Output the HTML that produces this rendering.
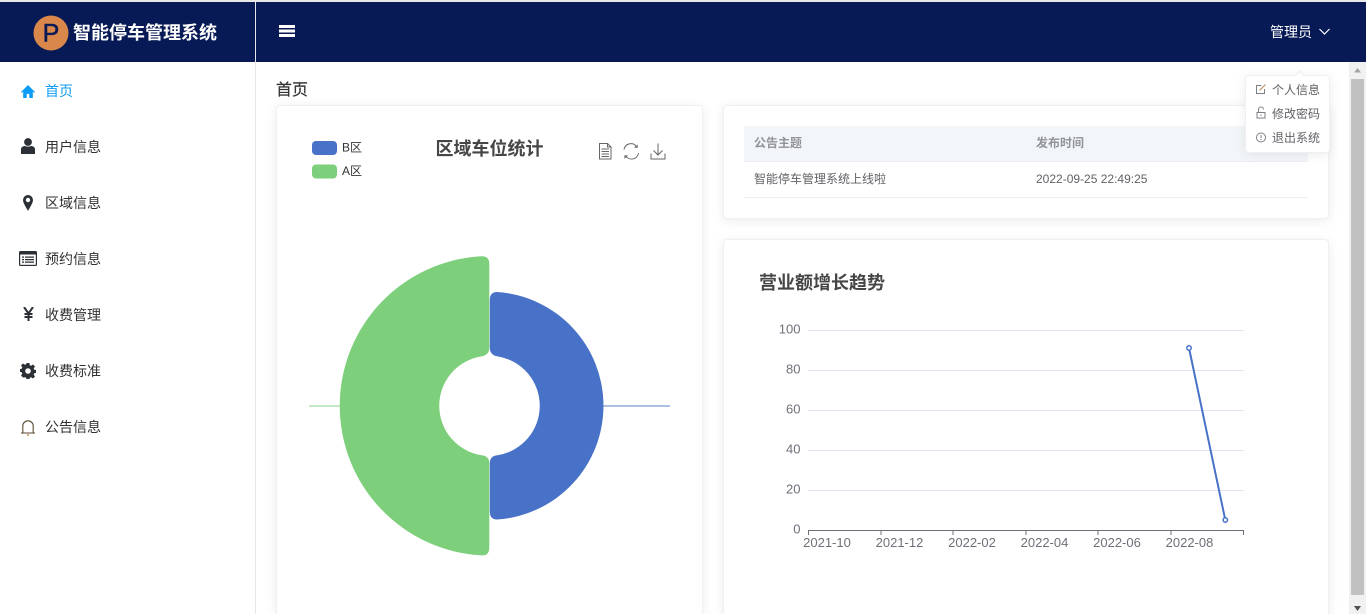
<!DOCTYPE html>
<html lang="zh-CN">
<head>
<meta charset="utf-8">
<title>智能停车管理系统</title>
<style>
*{box-sizing:border-box}
html,body{margin:0;padding:0;width:1366px;height:614px;overflow:hidden;background:#fff;font-family:"Liberation Sans","Noto Sans CJK SC",sans-serif}
#wrap{position:relative;width:1366px;height:614px;overflow:hidden;background:#fff}
.a{position:absolute}
.t{position:absolute;white-space:nowrap;line-height:20px;height:20px}
.side{font-size:14px;color:#303133;left:45px}
.card{position:absolute;background:#fff;border:1px solid #eef0f5;border-radius:4px;box-shadow:0 2px 12px rgba(0,0,0,.08)}
.open{border-bottom:0;border-radius:4px 4px 0 0}
svg{position:absolute;overflow:hidden}
svg text{font-family:"Liberation Sans","Noto Sans CJK SC",sans-serif}
</style>
</head>
<body>
<div id="wrap">
<div class="a" style="left:0;top:0;width:1366px;height:2px;background:#e8e8e8"></div>
<div class="a" style="left:0;top:2px;width:1366px;height:60px;background:#081a56"></div>
<div class="a" style="left:255px;top:2px;width:1px;height:612px;background:#e4e6ea"></div>

<svg style="left:33px;top:15px" width="36" height="36" viewBox="0 0 36 36"><circle cx="18" cy="18" r="17.500" fill="#d9874a"/><text x="18" y="26.500" font-size="25" text-anchor="middle" fill="#081a56" stroke="#081a56" stroke-width=".5">P</text></svg>
<div class="t" style="left:73px;top:23px;font-size:18px;font-weight:700;color:#fff">智能停车管理系统</div>

<svg style="left:279px;top:25px" width="16" height="12" viewBox="0 0 16 12"><path d="M0 0h16v3H0zM0 4.500h16v3H0zM0 9h16v3H0z" fill="#fff"/></svg>

<div class="t" style="left:1270px;top:22px;font-size:14px;color:#fff">管理员</div>
<svg style="left:1319px;top:28px" width="11" height="8" viewBox="0 0 11 8"><path d="M.5 1l5 5 5-5" fill="none" stroke="#fff" stroke-width="1.200"/></svg>

<!-- Sidebar -->
<svg style="left:21px;top:85px" width="14" height="13" viewBox="0 0 16 14" preserveAspectRatio="none"><path d="M8 0L0 7.500l1 1L2.500 7.200V14h4V9.500h3V14h4V7.200L15 8.500l1-1z" fill="#0c9bf5"/></svg>
<div class="t side" style="top:81px;color:#109df2">首页</div>

<svg style="left:21px;top:138px" width="14" height="16" viewBox="0 0 14 16"><circle cx="7" cy="4" r="3.900" fill="#2b2f36"/><path d="M0 16v-4.500C0 9 2 8 4 8c1 .8 5 .8 6 0 2 0 4 1 4 3.500V16z" fill="#2b2f36"/></svg>
<div class="t side" style="top:137px">用户信息</div>

<svg style="left:23px;top:195px" width="10" height="16" viewBox="0 0 10 16"><path fill-rule="evenodd" d="M5 0a5 5 0 0 1 5 5c0 3-3.500 8-5 11C3.500 13 0 8 0 5a5 5 0 0 1 5-5zm0 2.800a2.200 2.200 0 1 0 0 4.400 2.200 2.200 0 0 0 0-4.400z" fill="#2b2f36"/></svg>
<div class="t side" style="top:193px">区域信息</div>

<svg style="left:19px;top:251px" width="18" height="15" viewBox="0 0 18 15"><rect x="0" y="0" width="18" height="15" rx="1.500" fill="#2b2f36"/><rect x="1.200" y="3.500" width="15.600" height="10.300" fill="#fff"/><path d="M3 5.500h2v1.300H3zM6 5.500h9v1.300H6zM3 8h2v1.300H3zM6 8h9v1.300H6zM3 10.500h2v1.300H3zM6 10.500h9v1.300H6z" fill="#2b2f36"/></svg>
<div class="t side" style="top:249px">预约信息</div>

<svg style="left:23px;top:307px" width="11" height="14" viewBox="0 0 11 14"><path d="M1 0l4.500 6.500L10 0M5.500 6.500V14M1.500 7h8M1.500 10h8" fill="none" stroke="#2b2f36" stroke-width="2"/></svg>
<div class="t side" style="top:305px">收费管理</div>

<svg style="left:20px;top:363px" width="16" height="16" viewBox="0 0 16 16"><path fill-rule="evenodd" d="M6.600 0h2.800l.4 2.200 1.300.6L13 1.500l2 2-1.300 1.900.6 1.300 2.300.4v2.800l-2.300.4-.6 1.300 1.300 1.900-2 2-1.900-1.300-1.300.6-.4 2.200H6.600l-.4-2.200-1.300-.6L3 14.500l-2-2 1.300-1.900-.6-1.300L0 8.900V6.100l1.700-.4.600-1.300L1 2.500l2-2 1.900 1.300 1.300-.6zM8 5.200a2.800 2.800 0 1 0 0 5.600 2.800 2.800 0 0 0 0-5.600z" fill="#2b2f36"/></svg>
<div class="t side" style="top:361px">收费标准</div>

<svg style="left:20px;top:419px" width="16" height="17" viewBox="0 0 16 17"><path d="M1 14h14M2.800 14V7a5.200 5.200 0 0 1 10.400 0v7" fill="none" stroke="#5a4a30" stroke-width="1.100"/><path d="M7 16h2" stroke="#b8772c" stroke-width="1.200"/></svg>
<div class="t side" style="top:417px">公告信息</div>

<!-- Main -->
<div class="t" style="left:276px;top:81px;font-size:16px;color:#333;-webkit-text-stroke:.2px #333">首页</div>

<!-- Left card -->
<div class="card open" style="left:276px;top:105px;width:427px;height:509px"></div>
<svg style="left:0;top:0" width="1366" height="614" viewBox="0 0 1366 614">
  <rect x="312" y="141" width="25" height="14" rx="4" fill="#4872c7"/>
  <rect x="312" y="164.500" width="25" height="14" rx="4" fill="#7ecf7b"/>
  <text x="342" y="151.500" font-size="12" fill="#333">B区</text>
  <text x="342" y="175" font-size="12" fill="#333">A区</text>
  <text x="489.500" y="155" font-size="18" font-weight="700" text-anchor="middle" fill="#464646">区域车位统计</text>

  <g fill="none" stroke="#666" stroke-width="1">
    <path d="M599.500 143.500h8l3.500 3.500v12h-11.500zM607.500 143.500v3.500h3.500M601.500 149h7.500M601.500 151.500h7.500M601.500 154h7.500M601.500 156.500h7.500"/>
    <path d="M624 149.500a7 7 0 0 1 12.500-3M638.500 153a7 7 0 0 1-12.500 3.300"/>
    <path d="M651 153.500v5.500h14v-5.500M658 143.500v11.500M653.500 150.500l4.500 4.500 4.500-4.500"/>
  </g>
  <path d="M634 147.500l3.500.5.300-3.500zM628 155.500l-3.500-.3-.2 3.500z" fill="#666"/>

  <path d="M309 406h31" stroke="#7ecf7b" stroke-opacity=".6" stroke-width="1.500"/>
  <path d="M603 406h67" stroke="#4872c7" stroke-opacity=".6" stroke-width="1.500"/>
  <path d="M489.300 264Q489.300 256 481.800 256.200A149.800 149.800 0 0 0 481.800 555.400Q489.300 555.600 489.300 547.600V463Q489.300 456 481.500 455.200A50 50 0 0 1 481.500 356.400Q489.300 355 489.300 347.500Z" fill="#7ecf7b"/>
  <path d="M489.800 300Q489.800 292 497 292A114 114 0 0 1 497 519.500Q489.800 519.500 489.800 511.500V463Q489.800 456 497.500 455.200A50 50 0 0 0 497.500 356.400Q489.800 355 489.800 347.500Z" fill="#4872c7"/>
</svg>

<!-- Right cards -->
<div class="card" style="left:723px;top:105px;width:606px;height:114px"></div>
<div class="a" style="left:744px;top:126px;width:564px;height:36px;background:#f3f6f9;border-bottom:1px solid #ebeef5"></div>
<div class="t" style="left:754px;top:133px;font-size:12px;font-weight:700;color:#909399">公告主题</div>
<div class="t" style="left:1036px;top:133px;font-size:12px;font-weight:700;color:#909399">发布时间</div>
<div class="t" style="left:754px;top:169px;font-size:12px;color:#606266">智能停车管理系统上线啦</div>
<div class="t" style="left:1036px;top:169px;font-size:12px;color:#606266">2022-09-25 22:49:25</div>
<div class="a" style="left:744px;top:197px;width:564px;height:1px;background:#ebeef5"></div>

<div class="card open" style="left:723px;top:239px;width:606px;height:375px"></div>
<div class="t" style="left:759px;top:273px;font-size:18px;font-weight:700;color:#464646">营业额增长趋势</div>

<svg style="left:0;top:0" width="1366" height="614" viewBox="0 0 1366 614">
  <g stroke="#e0e6f1" stroke-width="1">
    <path d="M808 330.500h436M808 370.500h436M808 410.500h436M808 450.500h436M808 490.500h436"/>
  </g>
  <path d="M808 530.500h436M808.500 530v5M881 530v5M953 530v5M1026 530v5M1098 530v5M1171 530v5M1243.500 530v5" stroke="#6e7079" stroke-width="1" fill="none"/>
  <g font-size="13" fill="#6e7079" text-anchor="end">
    <text x="800.500" y="333.500">100</text>
    <text x="800.500" y="373.500">80</text>
    <text x="800.500" y="413.500">60</text>
    <text x="800.500" y="453.500">40</text>
    <text x="800.500" y="493.500">20</text>
    <text x="800.500" y="533.500">0</text>
  </g>
  <g font-size="13" fill="#6e7079" text-anchor="middle">
    <text x="827" y="547">2021-10</text>
    <text x="899.500" y="547">2021-12</text>
    <text x="972" y="547">2022-02</text>
    <text x="1044.500" y="547">2022-04</text>
    <text x="1117" y="547">2022-06</text>
    <text x="1189.500" y="547">2022-08</text>
  </g>
  <path d="M1189 348L1225.300 520" stroke="#4872c7" stroke-width="2" fill="none"/>
  <circle cx="1189" cy="348" r="2.200" fill="#fff" stroke="#4872c7" stroke-width="1.500"/>
  <circle cx="1225.300" cy="520" r="2.200" fill="#fff" stroke="#4872c7" stroke-width="1.500"/>
</svg>

<!-- Scrollbar -->
<div class="a" style="left:1349px;top:62px;width:17px;height:552px;background:#f1f1f1"></div>
<div class="a" style="left:1351px;top:79px;width:13px;height:516px;background:#c1c1c1"></div>
<svg style="left:1349px;top:62px" width="17" height="17" viewBox="0 0 17 17"><path d="M8.500 6L5 10.500h7z" fill="#a3a3a3"/></svg>
<svg style="left:1349px;top:597px" width="17" height="17" viewBox="0 0 17 17"><path d="M5 9h7l-3.500 5z" fill="#505050"/></svg>

<!-- Dropdown -->
<div class="a" style="left:1245px;top:75px;width:85px;height:78px;background:#fff;border:1px solid #eef0f5;border-radius:4px;box-shadow:0 2px 12px rgba(0,0,0,.08)"></div>
<div class="a" style="left:1296px;top:72px;width:7px;height:7px;background:#fff;transform:rotate(45deg);border-left:1px solid #ebeef5;border-top:1px solid #ebeef5"></div>
<svg style="left:1255px;top:83px" width="12" height="60" viewBox="0 0 12 60" fill="none" stroke="#7d7f85" stroke-width="1">
  <path d="M9.500 6v4.500h-8v-8h5"/><path d="M4.500 7.500l6-6" stroke="#b58a5e"/>
  <path d="M2 29.500h8v5.500H2zM3.500 29.500v-3a2.500 2.500 0 0 1 5 0"/><path d="M6 31.500v1.500"/>
  <circle cx="6" cy="54.500" r="4.500"/><path d="M6 52v3M6 56v1.200"/>
</svg>
<div class="t" style="left:1272px;top:80px;font-size:12px;color:#606266">个人信息</div>
<div class="t" style="left:1272px;top:104px;font-size:12px;color:#606266">修改密码</div>
<div class="t" style="left:1272px;top:128px;font-size:12px;color:#606266">退出系统</div>
</div>
</body>
</html>
